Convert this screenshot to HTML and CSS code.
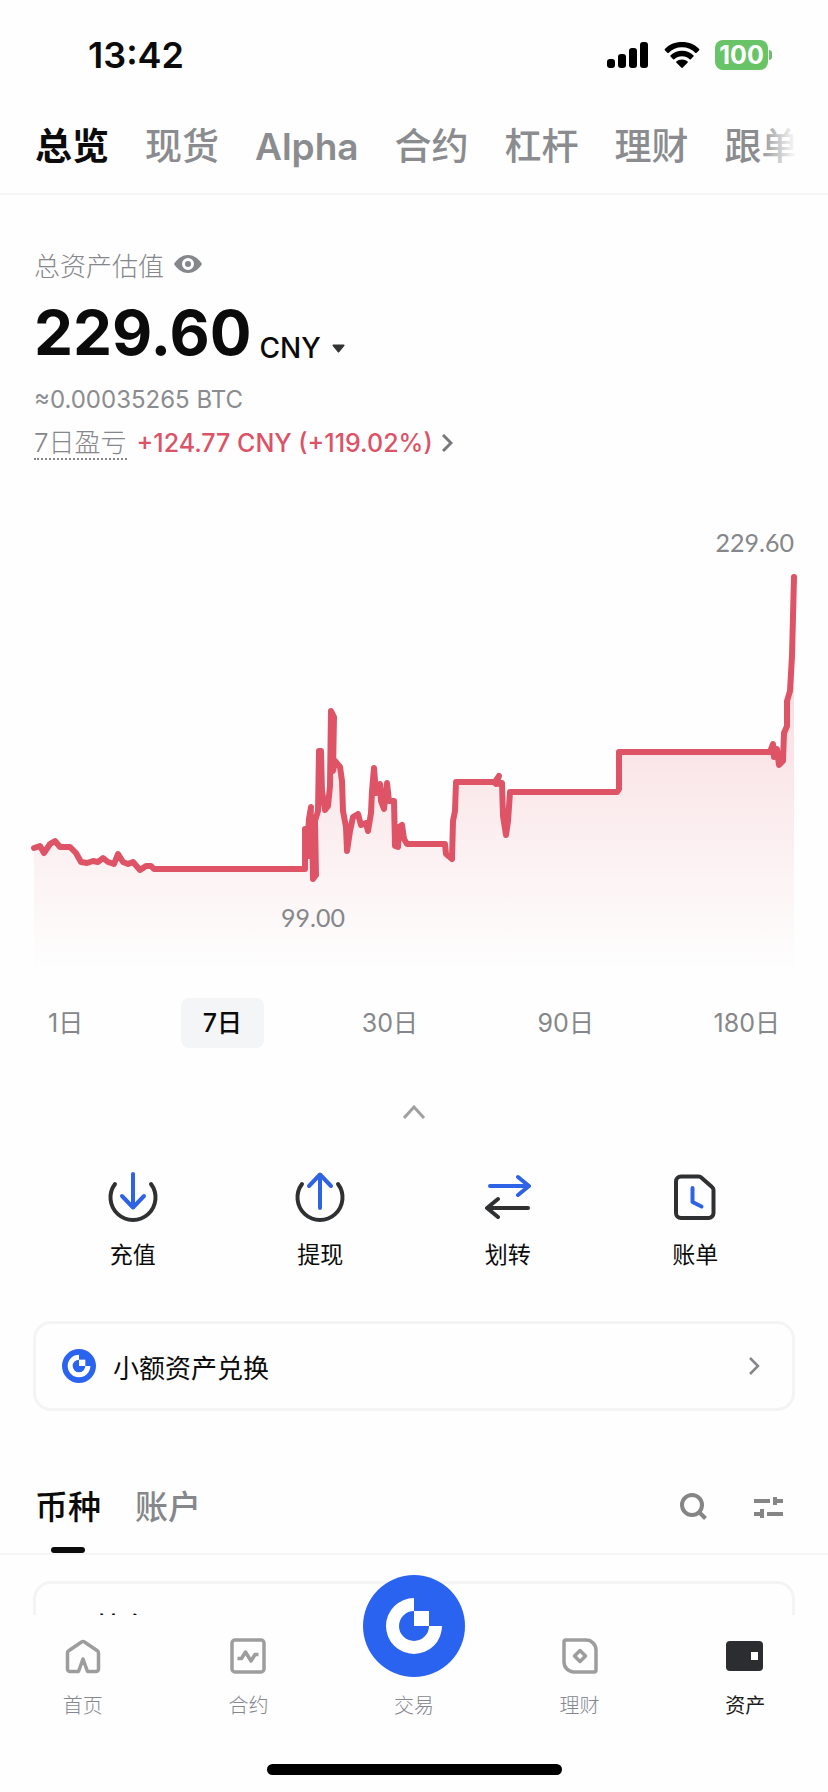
FILE: index.html
```html
<!DOCTYPE html>
<html lang="zh-CN">
<head>
  <meta charset="UTF-8" />
  <meta name="viewport" content="width=device-width, initial-scale=1.0"/>
  <title>资产总览</title>
  <link rel="stylesheet" href="styles.css">
</head>
<body>
  <header class="status-bar">
    <span class="clock">13:42</span>
    <div class="status-icons">
      <svg class="signal" width="42" height="28" viewBox="0 0 42 28">
        <rect x="0" y="18" width="8" height="9" rx="3"/>
        <rect x="11" y="13" width="8" height="14" rx="3"/>
        <rect x="22" y="7" width="8" height="20" rx="3"/>
        <rect x="33" y="1" width="8" height="26" rx="3"/>
      </svg>
      <svg class="wifi" width="36" height="28" viewBox="0 0 36 28">
        <path d="M18 1C11 1 5 3.600 .8 8l-.2.900 3 3.100.9-.1C8 8.300 12.700 6.300 18 6.300s10 2 13.500 5.600l.9.100 3-3.100-.2-.9C31 3.600 25 1 18 1z"/>
        <path d="M18 9.800c-4.600 0-8.700 1.700-11.600 4.600l-.1.900 3.100 3.100.9-.1c2-1.900 4.700-3.100 7.700-3.100s5.700 1.200 7.700 3.100l.9.100 3.100-3.100-.1-.9c-2.900-2.900-7-4.600-11.600-4.600z"/>
        <path d="M18 18.500c-2.200 0-4.200.8-5.700 2.100l-.1.900 5.300 5.300c.3.300.7.300 1 0l5.300-5.300-.1-.9c-1.500-1.300-3.500-2.100-5.700-2.100z"/>
      </svg>
      <div class="battery">100</div>
    </div>
  </header>

  <nav class="top-tabs">
    <a href="#" class="active">总览</a>
    <a href="#">现货</a>
    <a href="#" class="latin">Alpha</a>
    <a href="#">合约</a>
    <a href="#">杠杆</a>
    <a href="#">理财</a>
    <a href="#">跟单</a>
  </nav>

  <main>
    <section class="summary">
      <div class="summary-label">
        <span>总资产估值</span>
        <button class="icon-btn" aria-label="隐藏金额">
          <svg width="30" height="20" viewBox="0 0 30 20">
            <path d="M15 1C8.500 1 3.800 5.500 1 10c2.800 4.500 7.500 9 14 9s11.200-4.500 14-9C26.200 5.500 21.500 1 15 1z" fill="#85878a"/>
            <circle cx="15" cy="10" r="4.500" fill="none" stroke="#fff" stroke-width="3"/>
          </svg>
        </button>
      </div>
      <div class="amount-row">
        <span class="amount">229.60</span>
        <button class="currency">CNY
          <svg width="13" height="9" viewBox="0 0 13 9"><path d="M1.500 .5h10a1 1 0 0 1 .8 1.500L7.300 8a1 1 0 0 1-1.600 0L.7 2a1 1 0 0 1 .8-1.500z" fill="#333"/></svg>
        </button>
      </div>
      <div class="btc">≈0.00035265 BTC</div>
      <div class="pnl">
        <span class="pnl-label">7日盈亏</span>
        <a href="#" class="pnl-value">+124.77 CNY (+119.02%)
          <svg width="12" height="18" viewBox="0 0 12 18"><path d="M2 1l8 8-8 8" fill="none" stroke="#77797c" stroke-width="3"/></svg>
        </a>
      </div>
    </section>

    <svg class="chart" viewBox="0 0 828 460">
      <defs>
        <linearGradient id="area" gradientUnits="userSpaceOnUse" x1="0" y1="56" x2="0" y2="450">
          <stop offset="0" stop-color="#e05263" stop-opacity=".26"/>
          <stop offset="0.500" stop-color="#e05263" stop-opacity=".13"/>
          <stop offset="1" stop-color="#e05263" stop-opacity="0"/>
        </linearGradient>
      </defs>
      <path class="area" fill="url(#area)" d=""/>
      <path class="line" d=""/>
      <text x="794" y="31" text-anchor="end">229.60</text>
      <text x="313" y="406" text-anchor="middle">99.00</text>
    </svg>

    <div class="ranges">
      <button>1日</button>
      <button class="active">7日</button>
      <button>30日</button>
      <button>90日</button>
      <button>180日</button>
    </div>

    <button class="collapse" aria-label="收起">
      <svg width="24" height="14" viewBox="0 0 24 14"><path d="M2 13L12 2l10 11" fill="none" stroke="#a0a0a0" stroke-width="3"/></svg>
    </button>

    <div class="actions">
      <button>
        <svg width="52" height="52" viewBox="0 0 52 52">
          <path d="M8 13a22.500 22.500 0 1 0 36 0" stroke="#2f3032"/>
          <path d="M26 3v33M15 25l11 11.500L37 25" stroke="#2f63e6"/>
        </svg>
        充值
      </button>
      <button>
        <svg width="52" height="52" viewBox="0 0 52 52">
          <path d="M8 13a22.500 22.500 0 1 0 36 0" stroke="#2f3032"/>
          <path d="M26 37V4M15 15L26 3.500 37 15" stroke="#2f63e6"/>
        </svg>
        提现
      </button>
      <button>
        <svg width="52" height="52" viewBox="0 0 52 52">
          <path d="M8 15h38M36 6l11 9-11 9" stroke="#2f63e6"/>
          <path d="M46 37H6M16 28L5 37l11 9" stroke="#2f3032"/>
        </svg>
        划转
      </button>
      <button>
        <svg width="52" height="52" viewBox="0 0 52 52">
          <path d="M12 5.500h17.500a4 4 0 0 1 3 1.200L43 16a4 4 0 0 1 1.500 3v23a5 5 0 0 1-5 5H12a5 5 0 0 1-5-5V10.500a5 5 0 0 1 5-5z" stroke="#2f3032"/>
          <path d="M23.500 17v14l9 4.500" stroke="#2f63e6"/>
        </svg>
        账单
      </button>
    </div>

    <a href="#" class="convert">
      <svg width="34" height="34" viewBox="0 0 102 102">
        <circle cx="51" cy="51" r="51" fill="#2b63f1"/>
        <path d="M51 17v15a19 19 0 1 0 19 19h15a34 34 0 1 1-34-34z" fill="#fff"/>
        <path d="M51 32h19v19H51z" fill="#fff"/>
      </svg>
      <span>小额资产兑换</span>
      <svg width="12" height="18" viewBox="0 0 12 18"><path d="M2 1l8 8-8 8" fill="none" stroke="#85868a" stroke-width="2.500"/></svg>
    </a>

    <div class="list-head">
      <a href="#" class="active">币种</a>
      <a href="#">账户</a>
      <div class="list-tools">
        <button class="icon-btn" aria-label="搜索">
          <svg width="30" height="30" viewBox="0 0 30 30" fill="none" stroke="#858585" stroke-width="4">
            <circle cx="14" cy="13" r="10"/><path d="M20.500 19.500l7 7"/>
          </svg>
        </button>
        <button class="icon-btn" aria-label="筛选">
          <svg width="30" height="22" viewBox="0 0 30 22" fill="#858585">
            <rect x="0" y="3" width="16" height="4"/>
            <path d="M19 1h4v2h6v4h-6v2h-4z"/>
            <path d="M6 13h4v9H6v-2H0v-4h6z"/>
            <rect x="13" y="16" width="16" height="4"/>
          </svg>
        </button>
      </div>
    </div>

    <section class="asset-card">
      <span>基金</span>
    </section>
  </main>

  <nav class="bottom-nav">
    <div class="nav-items">
      <a href="#">
        <svg width="40" height="40" viewBox="0 0 40 40" fill="none" stroke="#9d9d9d" stroke-width="3.500" stroke-linejoin="round">
          <path d="M7 35.500h8.500L20 23l4.500 12.500H33a2.500 2.500 0 0 0 2.500-2.500V17a3 3 0 0 0-1.200-2.300L21.500 6a2.500 2.500 0 0 0-3 0L5.700 14.700A3 3 0 0 0 4.500 17v16A2.500 2.500 0 0 0 7 35.500z"/>
        </svg>
        首页
      </a>
      <a href="#">
        <svg width="40" height="40" viewBox="0 0 40 40" fill="none" stroke="#9d9d9d" stroke-width="3.500" stroke-linejoin="round">
          <rect x="4" y="4" width="32" height="32" rx="3"/>
          <path d="M9.500 22.500h4L17.500 16l5.500 9 4-6.500h3.500"/>
        </svg>
        合约
      </a>
      <a href="#" class="trade">
        <svg class="trade-logo" width="102" height="102" viewBox="0 0 102 102">
          <circle cx="51" cy="51" r="51" fill="#2b63f1"/>
          <path d="M51 23v13a15 15 0 1 0 15 15h13a28 28 0 1 1-28-28z" fill="#fff"/>
          <path d="M51 36h15v15H51z" fill="#fff"/>
        </svg>
        交易
      </a>
      <a href="#">
        <svg width="40" height="40" viewBox="0 0 40 40" fill="none" stroke="#9d9d9d" stroke-width="3.500" stroke-linejoin="round">
          <path d="M6 4h20a10 10 0 0 1 10 10v20a2 2 0 0 1-2 2H14A10 10 0 0 1 4 26V6a2 2 0 0 1 2-2z"/>
          <path d="M20 14.500l5.500 5.500-5.500 5.500-5.500-5.500z"/>
        </svg>
        理财
      </a>
      <a href="#" class="active">
        <svg width="40" height="40" viewBox="0 0 40 40">
          <rect x="1" y="5" width="37" height="30" rx="4" fill="#2c2d31"/>
          <rect x="26" y="16" width="7" height="8" fill="#fff"/>
        </svg>
        资产
      </a>
    </div>
    <div class="home-bar"></div>
  </nav>

  <script>
    // 7-day balance, x/y in chart units
    const points = [
      [34,327],[40,325],[44,332],[50,323],[55,320],[60,326],[70,326],[76,332],[81,341],[87,342],
      [93,340],[98,341],[103,337],[108,341],[114,343],[118,333],[123,341],[128,343],[133,341],[140,349],
      [146,345],[151,345],[154,348],[305,348],[305,308],[307,330],[309,298],[311,286],[309,335],[312,300],
      [313,358],[316,354],[315,300],[318,290],[319,230],[321,230],[322,270],[325,289],[328,285],[330,265],
      [331,190],[334,196],[333,250],[335,240],[340,246],[342,260],[343,290],[346,306],[347,330],[350,310],
      [353,296],[358,293],[361,304],[366,302],[368,310],[371,292],[372,270],[374,247],[376,272],[380,263],
      [381,280],[384,288],[387,262],[389,280],[394,280],[395,325],[398,326],[399,306],[402,304],[404,318],
      [407,323],[445,323],[446,333],[452,338],[453,300],[455,290],[456,261],[495,261],[499,255],[496,263],
      [502,262],[503,295],[506,314],[508,300],[510,271],[617,271],[619,268],[619,231],[770,231],[773,223],
      [774,236],[777,228],[779,244],[783,240],[784,212],[787,205],[787,180],[790,170],[792,135],[794,56]
    ];
    const line = "M" + points.map(p => p.join(",")).join("L");
    document.querySelector(".line").setAttribute("d", line);
    document.querySelector(".area").setAttribute("d", line + "L794,450L34,450Z");
  </script>
</body>
</html>
```

FILE: styles.css
```css
* {
  box-sizing: border-box;
}

body {
  margin: 0;
  min-height: 100vh;
  font-family: Inter, "Noto Sans CJK SC", sans-serif;
  background: #fefefe;
  color: #0b0b0c;
}

a {
  color: inherit;
  text-decoration: none;
}

button {
  padding: 0;
  border: none;
  background: none;
  font: inherit;
  color: inherit;
  cursor: pointer;
}

svg {
  display: block;
  flex: none;
}

.status-bar {
  display: flex;
  justify-content: space-between;
  align-items: center;
  height: 110px;
  padding: 0 60px 0 88px;
}

.clock {
  font-size: 36px;
  font-weight: 600;
}

.status-icons {
  display: flex;
  align-items: center;
  gap: 15px;
}

.battery {
  position: relative;
  width: 53px;
  height: 30px;
  border-radius: 8px;
  background: #68c466;
  color: #fff;
  font-size: 25px;
  font-weight: 700;
  line-height: 30px;
  text-align: center;
}

.battery::after {
  content: "";
  position: absolute;
  right: -4px;
  top: 10px;
  width: 3px;
  height: 10px;
  border-radius: 0 4px 4px 0;
  background: #68c466;
}

.top-tabs {
  display: flex;
  gap: 36px;
  height: 85px;
  padding-left: 35px;
  border-bottom: 2px solid #f5f5f5;
  overflow: hidden;
  position: relative;
  font-size: 37px;
  font-weight: 500;
  line-height: 74px;
  color: #8a8c8f;
  white-space: nowrap;
}

.top-tabs a {
  flex: none;
}

/* fades the last tab out at the right edge */
.top-tabs::after {
  content: "";
  position: absolute;
  right: 0;
  top: 0;
  width: 70px;
  height: 80px;
  background: linear-gradient(to right, #fefefe00, #fefefe 55%);
}

.top-tabs .active {
  color: #0b0b0c;
  font-weight: 600;
}

.top-tabs .latin {
  font-weight: 600;
}

.summary {
  padding: 48px 34px 0;
}

.summary-label {
  display: flex;
  align-items: center;
  gap: 9px;
  height: 42px;
  font-size: 26px;
  font-weight: 300;
  color: #85878a;
}

.amount-row {
  display: flex;
  align-items: flex-end;
  gap: 8px;
  height: 90px;
}

.amount {
  font-size: 62px;
  font-weight: 700;
  line-height: 84px;
}

.currency {
  display: flex;
  align-items: center;
  gap: 11px;
  font-size: 28px;
  font-weight: 500;
  line-height: 54px;
}

.btc {
  height: 50px;
  font-size: 24px;
  line-height: 50px;
  color: #8a8c8f;
}

.pnl {
  display: flex;
  align-items: center;
  gap: 10px;
  height: 36px;
  font-size: 25px;
}

.pnl-label {
  height: 34px;
  line-height: 34px;
  font-size: 26px;
  font-weight: 300;
  color: #85878a;
  border-bottom: 2px dotted #85878a;
}

.pnl-value {
  display: flex;
  align-items: center;
  gap: 8px;
  font-weight: 500;
  color: #dc5266;
}

.chart {
  width: 100%;
  margin-top: 60px;
}

.chart .line {
  fill: none;
  stroke: #de5365;
  stroke-width: 6;
  stroke-linejoin: round;
  stroke-linecap: round;
}

.chart text {
  font-family: Lato, sans-serif;
  font-size: 25px;
  fill: #85878a;
}

.ranges {
  display: flex;
  justify-content: space-between;
  margin-top: 17px;
  padding: 0 26px;
}

.ranges button {
  height: 50px;
  padding: 0 22px;
  border-radius: 8px;
  font-size: 25px;
  line-height: 48px;
  color: #85878a;
}

.ranges .active {
  background: #f4f5f7;
  color: #0b0b0c;
  font-weight: 500;
}

.collapse {
  display: block;
  margin: 57px auto 0;
}

.actions {
  display: grid;
  grid-template-columns: repeat(4, 1fr);
  margin-top: 52px;
  padding: 0 39px;
}

.actions button {
  display: flex;
  flex-direction: column;
  align-items: center;
  gap: 12px;
  font-size: 23px;
  line-height: 40px;
}

.actions path {
  fill: none;
  stroke-width: 4;
  stroke-linecap: round;
  stroke-linejoin: round;
}

.convert {
  display: flex;
  align-items: center;
  gap: 17px;
  height: 90px;
  margin: 46px 33px 0;
  padding: 0 32px 0 26px;
  border: 3px solid #f4f4f5;
  border-radius: 18px;
  font-size: 26px;
}

.convert span {
  flex: 1;
}

.list-head {
  display: flex;
  gap: 34px;
  height: 94px;
  margin-top: 50px;
  padding: 0 44px 0 35px;
  border-bottom: 2px solid #f6f6f6;
  font-size: 33px;
  font-weight: 500;
  line-height: 92px;
  color: #85878a;
}

.list-head a {
  position: relative;
}

.list-head .active {
  color: #0b0b0c;
}

.list-head .active::after {
  content: "";
  position: absolute;
  left: 50%;
  bottom: 0;
  width: 34px;
  height: 6px;
  margin-left: -17px;
  border-radius: 3px;
  background: #0b0b0c;
}

.list-tools {
  display: flex;
  align-items: center;
  gap: 46px;
  margin-left: auto;
}

.asset-card {
  height: 150px;
  margin: 26px 33px 0;
  padding: 22px 58px;
  border: 3px solid #f4f4f5;
  border-radius: 18px;
  font-size: 27px;
  font-weight: 500;
}

.bottom-nav {
  position: fixed;
  left: 0;
  right: 0;
  bottom: 0;
  padding-bottom: 17px;
  background: #fefefe;
}

.nav-items {
  display: flex;
  height: 149px;
  padding-top: 21px;
}

.nav-items a {
  position: relative;
  flex: 1;
  display: flex;
  flex-direction: column;
  align-items: center;
  gap: 15px;
  font-size: 20px;
  font-weight: 300;
  line-height: 30px;
  color: #85878f;
}

.nav-items .active {
  color: #1b1c20;
  font-weight: 400;
}

.nav-items .trade {
  padding-top: 55px;
}

.trade-logo {
  position: absolute;
  top: -61px;
}

.home-bar {
  width: 295px;
  height: 11px;
  margin: 0 auto;
  border-radius: 6px;
  background: #000;
}
```
